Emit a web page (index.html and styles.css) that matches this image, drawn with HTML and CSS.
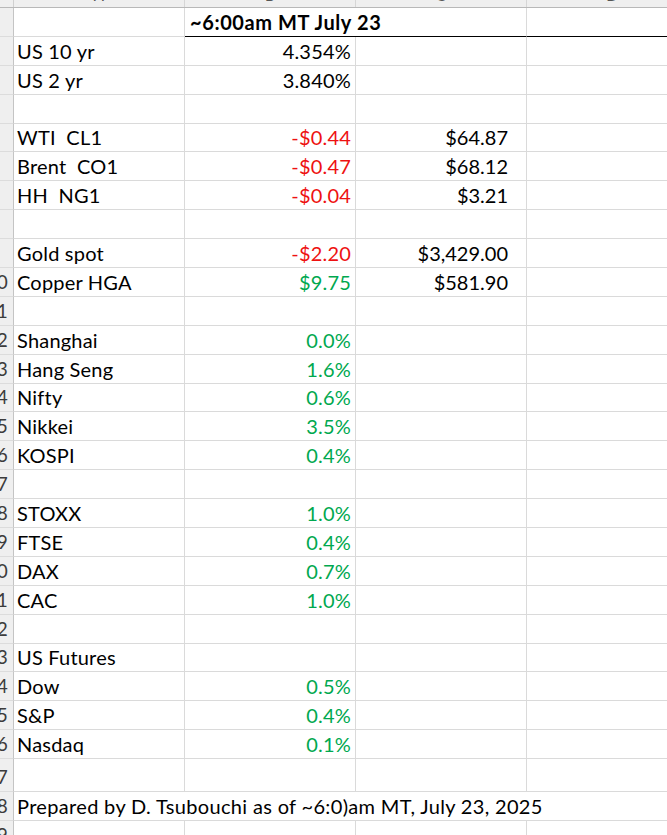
FILE: index.html
```html
<!DOCTYPE html>
<html lang="en">
<head>
<meta charset="utf-8">
<title>Market snapshot</title>
<link rel="stylesheet" href="styles.css">
</head>
<body>
<div class="sheet">
  <div class="row colhead">
    <div class="corner"></div>
    <div class="ch"><span>A</span></div>
    <div class="ch"><span>B</span></div>
    <div class="ch"><span>C</span></div>
    <div class="ch"><span>D</span></div>
  </div>

  <div class="row">
    <div class="rh"></div>
    <div class="c a"></div>
    <div class="c bc title">~6:00am MT July 23</div>
    <div class="c d title-line"></div>
  </div>

  <div class="row"><div class="rh"></div><div class="c a">US 10 yr</div><div class="c b">4.354%</div><div class="c cc"></div><div class="c d"></div></div>
  <div class="row"><div class="rh"></div><div class="c a">US 2 yr</div><div class="c b">3.840%</div><div class="c cc"></div><div class="c d"></div></div>
  <div class="row"><div class="rh"></div><div class="c a"></div><div class="c b"></div><div class="c cc"></div><div class="c d"></div></div>

  <div class="row"><div class="rh"></div><div class="c a">WTI&nbsp;&nbsp;CL1</div><div class="c b neg">-$0.44</div><div class="c cc">$64.87</div><div class="c d"></div></div>
  <div class="row"><div class="rh"></div><div class="c a">Brent&nbsp;&nbsp;CO1</div><div class="c b neg">-$0.47</div><div class="c cc">$68.12</div><div class="c d"></div></div>
  <div class="row"><div class="rh"></div><div class="c a">HH&nbsp;&nbsp;NG1</div><div class="c b neg">-$0.04</div><div class="c cc">$3.21</div><div class="c d"></div></div>
  <div class="row"><div class="rh"></div><div class="c a"></div><div class="c b"></div><div class="c cc"></div><div class="c d"></div></div>

  <div class="row"><div class="rh"></div><div class="c a">Gold spot</div><div class="c b neg">-$2.20</div><div class="c cc">$3,429.00</div><div class="c d"></div></div>
  <div class="row"><div class="rh"><span>10</span></div><div class="c a">Copper HGA</div><div class="c b pos">$9.75</div><div class="c cc">$581.90</div><div class="c d"></div></div>
  <div class="row"><div class="rh"><span>11</span></div><div class="c a"></div><div class="c b"></div><div class="c cc"></div><div class="c d"></div></div>

  <div class="row"><div class="rh"><span>12</span></div><div class="c a">Shanghai</div><div class="c b pos">0.0%</div><div class="c cc"></div><div class="c d"></div></div>
  <div class="row"><div class="rh"><span>13</span></div><div class="c a">Hang Seng</div><div class="c b pos">1.6%</div><div class="c cc"></div><div class="c d"></div></div>
  <div class="row"><div class="rh"><span>14</span></div><div class="c a">Nifty</div><div class="c b pos">0.6%</div><div class="c cc"></div><div class="c d"></div></div>
  <div class="row"><div class="rh"><span>15</span></div><div class="c a">Nikkei</div><div class="c b pos">3.5%</div><div class="c cc"></div><div class="c d"></div></div>
  <div class="row"><div class="rh"><span>16</span></div><div class="c a">KOSPI</div><div class="c b pos">0.4%</div><div class="c cc"></div><div class="c d"></div></div>
  <div class="row"><div class="rh"><span>17</span></div><div class="c a"></div><div class="c b"></div><div class="c cc"></div><div class="c d"></div></div>

  <div class="row"><div class="rh"><span>18</span></div><div class="c a">STOXX</div><div class="c b pos">1.0%</div><div class="c cc"></div><div class="c d"></div></div>
  <div class="row"><div class="rh"><span>19</span></div><div class="c a">FTSE</div><div class="c b pos">0.4%</div><div class="c cc"></div><div class="c d"></div></div>
  <div class="row"><div class="rh"><span>20</span></div><div class="c a">DAX</div><div class="c b pos">0.7%</div><div class="c cc"></div><div class="c d"></div></div>
  <div class="row"><div class="rh"><span>21</span></div><div class="c a">CAC</div><div class="c b pos">1.0%</div><div class="c cc"></div><div class="c d"></div></div>
  <div class="row"><div class="rh"><span>22</span></div><div class="c a"></div><div class="c b"></div><div class="c cc"></div><div class="c d"></div></div>

  <div class="row"><div class="rh"><span>23</span></div><div class="c a">US Futures</div><div class="c b"></div><div class="c cc"></div><div class="c d"></div></div>
  <div class="row"><div class="rh"><span>24</span></div><div class="c a">Dow</div><div class="c b pos">0.5%</div><div class="c cc"></div><div class="c d"></div></div>
  <div class="row"><div class="rh"><span>25</span></div><div class="c a">S&amp;P</div><div class="c b pos">0.4%</div><div class="c cc"></div><div class="c d"></div></div>
  <div class="row"><div class="rh"><span>26</span></div><div class="c a">Nasdaq</div><div class="c b pos">0.1%</div><div class="c cc"></div><div class="c d"></div></div>
  <div class="row tall"><div class="rh"><span>27</span></div><div class="c a"></div><div class="c b"></div><div class="c cc"></div><div class="c d"></div></div>

  <div class="row"><div class="rh"><span>28</span></div><div class="c wide">Prepared by D. Tsubouchi as of ~6:0)am MT, July 23, 2025</div></div>
  <div class="row"><div class="rh"><span>29</span></div><div class="c a"></div><div class="c b"></div><div class="c cc"></div><div class="c d"></div></div>
</div>
</body>
</html>
```

FILE: styles.css
```css
html, body {
  margin: 0;
  padding: 0;
  background: #ffffff;
}

body {
  width: 667px;
  height: 835px;
  overflow: hidden;
  font-family: "Lato", "Open Sans", sans-serif;
  font-size: 20px;
  letter-spacing: 0.2px;
  color: #000000;
}

.sheet {
  display: flex;
  flex-direction: column;
  width: 700px;
}

.row {
  display: flex;
  height: 28.9px;
  flex: none;
}

.row.tall {
  height: 33px;
}

/* column header strip */
.row.colhead {
  height: 8px;
  background: #efefef;
  border-bottom: 1px solid #b8b8b8;
  box-sizing: border-box;
}

.corner {
  width: 14px;
  flex: none;
  border-right: 1px solid #d0d0d0;
  box-sizing: border-box;
}

.ch {
  width: 171px;
  flex: none;
  box-sizing: border-box;
  border-right: 1px solid #d6d6d6;
  overflow: hidden;
  display: flex;
  justify-content: center;
  align-items: flex-start;
}

.ch span {
  font-size: 15px;
  line-height: 18px;
  margin-top: -14px;
  color: #555555;
}

/* row header */
.rh {
  width: 14px;
  flex: none;
  box-sizing: border-box;
  background: #efefef;
  border-right: 1px solid #c4c4c4;
  border-bottom: 1px solid #dcdcdc;
  overflow: hidden;
  display: flex;
  justify-content: flex-end;
  align-items: flex-end;
  padding-right: 5px;
  padding-bottom: 3px;
}

.rh span {
  font-size: 19px;
  color: #3c3c3c;
  white-space: nowrap;
}

/* cells */
.c {
  flex: none;
  box-sizing: border-box;
  border-right: 1px solid #dadada;
  border-bottom: 1px solid #dadada;
  display: flex;
  align-items: flex-end;
  padding: 0 4px 2px 3px;
  white-space: nowrap;
}

.a {
  width: 171px;
}

.b {
  width: 171px;
  justify-content: flex-end;
}

.cc {
  width: 171px;
  justify-content: flex-end;
  padding-right: 18px;
  letter-spacing: 0;
}

.d {
  width: 171px;
}

.bc {
  width: 342px;
}

.title {
  font-weight: 700;
  letter-spacing: 0.6px;
  padding-left: 5px;
  border-bottom: 1px solid #000000;
}

.title-line {
  border-bottom: 1px solid #000000;
}

.wide {
  width: 684px;
  letter-spacing: 0.33px;
}

.neg {
  color: #ee1111;
}

.pos {
  color: #00a84f;
}
```
